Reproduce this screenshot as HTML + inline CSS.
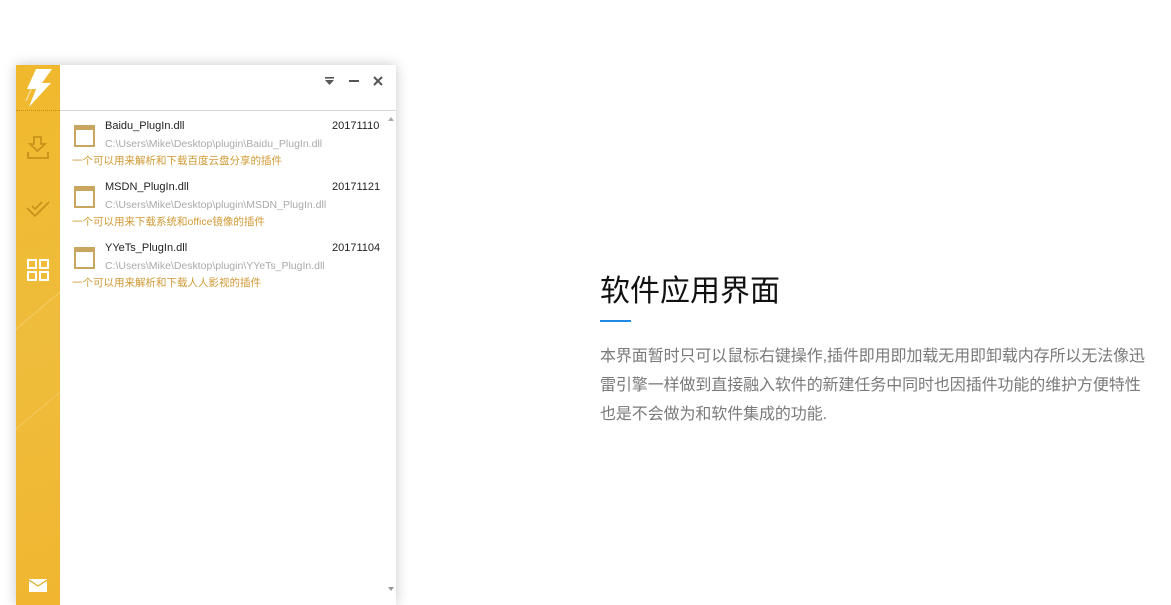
<!DOCTYPE html>
<html><head><meta charset="utf-8"><style>
body{margin:0;width:1171px;height:600px;overflow:hidden;background:#fff;font-family:"Liberation Sans","Noto Sans CJK SC",sans-serif;position:relative}
.win{position:absolute;left:16px;top:65px;width:380px;height:540px;background:#fff;box-shadow:0 0 12px rgba(0,0,0,.22)}
.side{position:absolute;left:0;top:0;width:44px;height:100%;background:linear-gradient(160deg,#f0b82c,#efbd3c 50%,#f0b630);overflow:hidden}
.dots{position:absolute;left:0;top:45px;width:44px;border-top:1px dotted #c58e10}
.hl{position:absolute;left:44px;top:45px;right:0;border-top:1px solid #d6d6d6}
.item{position:absolute;left:56px;width:310px;height:60px}
.ic{position:absolute;left:2px;top:7px;width:21px;height:22px;border:2px solid #c9a660;border-top-width:5px;box-sizing:border-box}
.nm{position:absolute;left:33px;top:2px;font-size:11px;color:#222}
.dt{position:absolute;left:260px;top:2px;font-size:11px;color:#222}
.pt{position:absolute;left:33px;top:20px;font-size:10.5px;color:#aaa}
.ds{position:absolute;left:0;top:35px;font-size:10.5px;color:#d09a35}
.t{position:absolute;left:600px;top:266px;font-size:30px;color:#111}
.bar{position:absolute;left:600px;top:320px;width:31px;height:2px;background:#1e88e5}
.p{position:absolute;left:600px;top:342px;width:570px;font-size:16px;letter-spacing:-0.1px;line-height:29px;color:#7a7a7a;white-space:nowrap}
</style></head><body>
<div class="win">
<div class="side">
<div style="position:absolute;left:-20px;top:230px;width:120px;height:1px;background:rgba(255,255,255,.25);transform:rotate(-40deg)"></div>
<div style="position:absolute;left:-20px;top:330px;width:120px;height:1px;background:rgba(255,255,255,.2);transform:rotate(-40deg)"></div>
<svg style="position:absolute;left:6px;top:3px" width="34" height="40" viewBox="0 0 34 40"><path d="M14 1H30L20 15H29L7 39L14 21H5Z" fill="#fff"/><path d="M11 17L4 33" stroke="rgba(255,255,255,.5)" stroke-width="1.5"/></svg>
<div class="dots"></div>
<svg style="position:absolute;left:10px;top:70px" width="24" height="26" viewBox="0 0 24 26" fill="none" stroke="#c9921c" stroke-width="1.8"><path d="M8 2H15V9H19L11.5 16L4 9H8Z"/><path d="M2 17V23H22V17"/></svg>
<svg style="position:absolute;left:9px;top:134px" width="26" height="20" viewBox="0 0 26 20" fill="none" stroke="#c9921c" stroke-width="1.8"><path d="M2 9L10 17L24 3"/><path d="M7 7L10 10L17 3"/></svg>
<svg style="position:absolute;left:11px;top:194px" width="22" height="22" viewBox="0 0 22 22" fill="none" stroke="#fff" stroke-width="2"><rect x="1" y="1" width="8" height="8"/><rect x="13" y="1" width="8" height="8"/><rect x="1" y="13" width="8" height="8"/><rect x="13" y="13" width="8" height="8"/></svg>
<div style="position:absolute;left:40px;top:201px;width:0;height:0;border:4px solid transparent;border-right-color:#fff"></div>
<svg style="position:absolute;left:13px;top:514px" width="18" height="13" viewBox="0 0 18 13"><rect width="18" height="13" fill="#fff"/><path d="M0 1L9 7L18 1" fill="none" stroke="#e3ad2c" stroke-width="1.2"/></svg>
</div>
<div class="hl"></div>
<svg style="position:absolute;left:308px;top:11px" width="60" height="11" viewBox="0 0 60 11"><rect x="1" y="1" width="9" height="1.6" fill="#555"/><path d="M1 4H10L5.5 9Z" fill="#555"/><rect x="25" y="4" width="10" height="2" fill="#555"/><path d="M50 1L58 9M58 1L50 9" stroke="#555" stroke-width="2"/></svg>
<svg style="position:absolute;left:372px;top:52px" width="6" height="4"><path d="M0 4L3 0L6 4Z" fill="#aaa"/></svg>
<svg style="position:absolute;left:372px;top:522px" width="6" height="4"><path d="M0 0L6 0L3 4Z" fill="#999"/></svg>
<div class="item" style="top:53px"><div class="ic"></div><div class="nm">Baidu_PlugIn.dll</div><div class="dt">20171110</div><div class="pt">C:\Users\Mike\Desktop\plugin\Baidu_PlugIn.dll</div><div class="ds">一个可以用来解析和下载百度云盘分享的插件</div></div>
<div class="item" style="top:114px"><div class="ic"></div><div class="nm">MSDN_PlugIn.dll</div><div class="dt">20171121</div><div class="pt">C:\Users\Mike\Desktop\plugin\MSDN_PlugIn.dll</div><div class="ds">一个可以用来下载系统和office镜像的插件</div></div>
<div class="item" style="top:175px"><div class="ic"></div><div class="nm">YYeTs_PlugIn.dll</div><div class="dt">20171104</div><div class="pt">C:\Users\Mike\Desktop\plugin\YYeTs_PlugIn.dll</div><div class="ds">一个可以用来解析和下载人人影视的插件</div></div>
</div>
<div class="t">软件应用界面</div>
<div class="bar"></div>
<div class="p">本界面暂时只可以鼠标右键操作,插件即用即加载无用即卸载内存所以无法像迅<br>雷引擎一样做到直接融入软件的新建任务中同时也因插件功能的维护方便特性<br>也是不会做为和软件集成的功能.</div>
</body></html>
